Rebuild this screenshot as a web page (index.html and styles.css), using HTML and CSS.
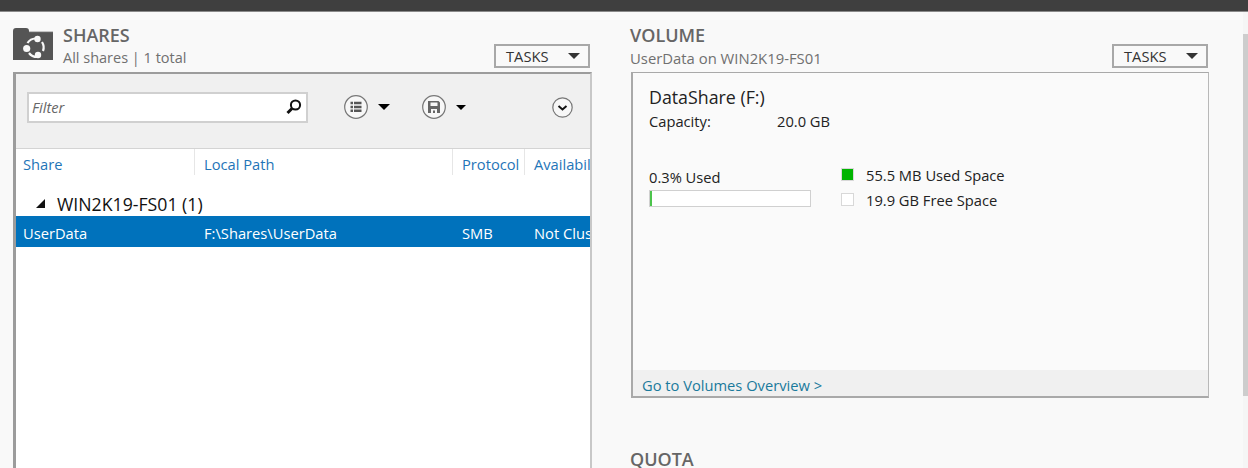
FILE: index.html
```html
<!DOCTYPE html>
<html lang="en">
<head>
  <meta charset="UTF-8" />
  <title>Shares</title>
  <link rel="stylesheet" href="styles.css">
</head>
<body>
  <div class="topbar"></div>

  <div class="content">
    <!-- Shares -->
    <section class="shares">
      <div class="section-head">
        <svg class="folder-icon" width="40" height="32" viewBox="0 0 40 32">
          <path fill="#555" d="M0 3a3 3 0 0 1 3-3h10a3 3 0 0 1 3 3v1h24v28H0z"/>
          <path fill="#8f8f8f" d="M16 3.500h24v.700H16z"/>
          <path d="M14.500 15a10 10 0 0 1 8-4.500M29 14a10 10 0 0 1 1 9M24 29a10 10 0 0 1-8-4" fill="none" stroke="#f9f9f9" stroke-width="2.200"/>
          <circle cx="24.500" cy="11" r="3.200" fill="#f9f9f9"/>
          <circle cx="13.700" cy="20.500" r="3.600" fill="#f9f9f9"/>
          <circle cx="25" cy="27" r="3.200" fill="#f9f9f9"/>
        </svg>
        <div class="head-text">
          <h2>SHARES</h2>
          <p>All shares | 1 total</p>
        </div>
        <div class="tasks">TASKS<span class="caret"></span></div>
      </div>

      <div class="panel">
        <div class="toolbar">
          <div class="filter">
            <span>Filter</span>
            <svg width="18" height="18" viewBox="0 0 18 18">
              <circle cx="10.500" cy="7" r="4.600" fill="none" stroke="#111" stroke-width="2"/>
              <path d="M7 10.500 2.500 15" stroke="#111" stroke-width="3"/>
            </svg>
          </div>
          <div class="tool tool-list">
            <svg width="24" height="24" viewBox="0 0 24 24">
              <circle cx="12" cy="12" r="11.300" fill="#f7f7f7" stroke="#777" stroke-width="1.200"/>
              <path fill="#555" d="M6.500 6.800H9v2.500H6.500zM10 6.800h7.500v2.500H10zM6.500 10.700H9v2.500H6.500zM10 10.700h7.500v2.500H10zM6.500 14.600H9v2.500H6.500zM10 14.600h7.500v2.500H10z"/>
            </svg>
            <span class="caret black"></span>
          </div>
          <div class="tool tool-save">
            <svg width="24" height="24" viewBox="0 0 24 24">
              <circle cx="12" cy="12" r="11.300" fill="#f7f7f7" stroke="#777" stroke-width="1.200"/>
              <path fill="#666" fill-rule="evenodd" d="M6 6h10.500L18 7.500V18H6zM8.500 7.500V11h7V7.500zM9 14v4h6v-4zM11 15.500h2V18h-2z"/>
            </svg>
            <span class="caret black small"></span>
          </div>
          <svg class="expand" width="21" height="21" viewBox="0 0 21 21">
            <circle cx="10.500" cy="10.500" r="9.700" fill="#f7f7f7" stroke="#777" stroke-width="1.200"/>
            <path d="M6.500 9l4 3.500 4-3.500" fill="none" stroke="#111" stroke-width="2"/>
          </svg>
        </div>

        <div class="columns">
          <div class="col col-share">Share</div>
          <div class="col col-path">Local Path</div>
          <div class="col col-proto">Protocol</div>
          <div class="col col-avail">Availability Type</div>
        </div>

        <div class="group"><span class="tri"></span>WIN2K19-FS01 (1)</div>

        <div class="row">
          <div class="col-share">UserData</div>
          <div class="col-path">F:\Shares\UserData</div>
          <div class="col-proto">SMB</div>
          <div class="col-avail">Not Clustered</div>
        </div>
      </div>
    </section>

    <!-- Volume -->
    <section class="volume">
      <div class="section-head">
        <div class="head-text">
          <h2>VOLUME</h2>
          <p>UserData on WIN2K19-FS01</p>
        </div>
        <div class="tasks">TASKS<span class="caret"></span></div>
      </div>

      <div class="card">
        <div class="card-body">
          <h3>DataShare (F:)</h3>
          <div class="capacity"><span>Capacity:</span><span>20.0 GB</span></div>
          <div class="usage">
            <div class="used">
              <div class="used-label">0.3% Used</div>
              <div class="bar"><div class="bar-fill" style="width: 2px"></div></div>
            </div>
            <div class="legend">
              <div class="legend-item"><span class="swatch green"></span>55.5 MB Used Space</div>
              <div class="legend-item"><span class="swatch"></span>19.9 GB Free Space</div>
            </div>
          </div>
        </div>
        <div class="card-foot">Go to Volumes Overview &gt;</div>
      </div>

      <h2 class="quota">QUOTA</h2>
    </section>

    <div class="scrollbar"><div class="thumb"></div></div>
  </div>
</body>
</html>
```

FILE: styles.css
```css
* {
  box-sizing: border-box;
}
html, body {
  height: 100%;
}
body {
  margin: 0;
  display: flex;
  flex-direction: column;
  overflow: hidden;
  background-color: #f9f9f9;
  font-family: "Open Sans", "Noto Sans", sans-serif;
  font-size: 14.7px;
  color: #222;
}
h2, h3, p {
  margin: 0;
  font-weight: normal;
}

.topbar {
  height: 12px;
  flex: none;
  background-color: #3f3f3f;
  border-bottom: 1px solid #8a8a8a;
}
.content {
  flex: 1;
  min-height: 0;
  display: flex;
  padding-left: 13px;
}

/* Section columns */
.shares {
  width: 579px;
  flex: none;
  display: flex;
  flex-direction: column;
}
.volume {
  width: 578px;
  flex: none;
  margin-left: 39px;
}
.section-head {
  height: 60px;
  display: flex;
  align-items: flex-end;
  flex: none;
}
.folder-icon {
  flex: none;
  margin: 0 10px 12px 0;
}
.head-text {
  flex: 1;
  padding-bottom: 4px;
}
.volume .head-text {
  margin-left: -1px;
}
.head-text h2, .quota {
  font-size: 18px;
  line-height: 22px;
  font-weight: 600;
  color: #666;
}
.head-text h2 {
  margin-bottom: 2px;
}
.head-text p {
  font-size: 14.500px;
  line-height: 20px;
  color: #707070;
}
.volume .head-text p {
  font-size: 14.850px;
}
.tasks {
  width: 96px;
  height: 24px;
  margin-bottom: 4px;
  margin-right: 2px;
  padding: 0 8px 0 10px;
  display: flex;
  align-items: center;
  justify-content: space-between;
  border: 2px solid #a8a8a8;
  color: #333;
}
.volume .tasks {
  margin-right: 1px;
}
.caret {
  width: 0;
  height: 0;
  border-left: 6px solid transparent;
  border-right: 6px solid transparent;
  border-top: 6px solid #333;
}
.caret.black {
  border-top-color: #000;
}
.caret.small {
  border-left-width: 5px;
  border-right-width: 5px;
  border-top-width: 5px;
}

/* Shares panel */
.panel {
  flex: 1;
  min-height: 0;
  overflow: hidden;
  background: white;
  border: 2px solid #9c9c9c;
  border-left-width: 3px;
  border-right-color: #c8c8c8;
  border-bottom: none;
}
.toolbar {
  height: 75px;
  display: flex;
  align-items: center;
  background-color: #f0f0f0;
  border-bottom: 1px solid #d4d4d4;
  padding: 0 0 8px 11px;
}
.filter {
  width: 281px;
  height: 31px;
  display: flex;
  flex: none;
  align-items: center;
  justify-content: space-between;
  padding: 0 3px 0 3px;
  background: white;
  border: 2px solid #d0d0d0;
  font-style: italic;
  color: #666;
}
.tool {
  display: flex;
  align-items: center;
  gap: 10px;
}
.tool-list {
  margin-left: 36px;
}
.tool-save {
  margin-left: 32px;
}
.expand {
  margin-left: 86px;
}

.columns, .row {
  display: flex;
  white-space: nowrap;
  overflow: hidden;
}
.columns {
  height: 30px;
  color: #1f75b8;
  line-height: 31px;
}
.col {
  height: 26px;
  border-right: 1px solid #e6e6e6;
}
.col.col-avail {
  border-right: none;
}
.col-share {
  width: 179px;
  padding-left: 7px;
  flex: none;
}
.col-path {
  width: 258px;
  padding-left: 9px;
  flex: none;
}
.col-proto {
  width: 72px;
  padding-left: 9px;
  flex: none;
}
.col-avail {
  padding-left: 9px;
  flex: none;
}
.group {
  height: 37px;
  padding: 12px 0 0 20px;
  display: flex;
  align-items: center;
  font-size: 17.700px;
  color: #111;
}
.tri {
  width: 0;
  height: 0;
  margin-right: 12px;
  border-left: 9px solid transparent;
  border-bottom: 9px solid #111;
}
.row {
  height: 31px;
  padding-top: 2px;
  line-height: 30px;
  background-color: #0072bc;
  color: white;
}

/* Volume card */
.card {
  height: 326px;
  display: flex;
  flex-direction: column;
  border: 2px solid #a9a9a9;
  border-top-width: 1px;
  border-right: 1px solid #b8b8b8;
  background-color: #fafafa;
}
.card-body {
  flex: 1;
  padding: 12px 0 0 16px;
}
.card-body h3 {
  font-size: 17.800px;
  line-height: 24px;
  color: #222;
}
.capacity {
  display: flex;
  line-height: 25px;
}
.capacity span:first-child {
  width: 128px;
}
.usage {
  display: flex;
  margin-top: 32px;
}
.used {
  width: 192px;
}
.used-label {
  line-height: 22px;
}
.bar {
  width: 162px;
  height: 17px;
  margin-top: 2px;
  background: white;
  border: 1px solid #d0d0d0;
}
.bar-fill {
  height: 100%;
  background-color: #4cc44c;
}
.legend {
  margin-top: -4px;
}
.legend-item {
  height: 25px;
  display: flex;
  align-items: center;
  gap: 12px;
}
.swatch {
  width: 13px;
  height: 13px;
  background: white;
  border: 1px solid #d8d8d8;
}
.swatch.green {
  background-color: #00b400;
}
.card-foot {
  height: 26px;
  padding-left: 9px;
  line-height: 30px;
  background-color: #f0f0f0;
  color: #1a7a9c;
}
.quota {
  margin-top: 50px;
  margin-left: -1px;
}

/* Scrollbar */
.scrollbar {
  flex: none;
  width: 5px;
  margin-left: auto;
  background-color: #f5f5f5;
}
.thumb {
  height: 362px;
  margin-top: 22px;
  background-color: #cdcdcd;
}
```
